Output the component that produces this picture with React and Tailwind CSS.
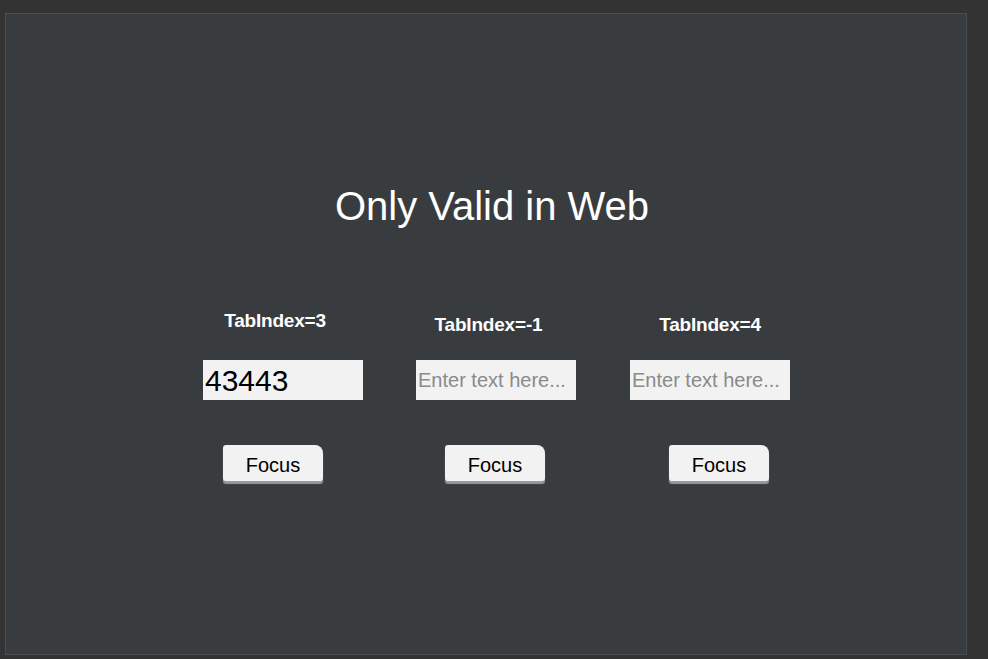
import React, { useState } from 'react'

const cols = [
  { label: 'TabIndex=3', value: '43443', labelCls: 'pr-[16px]', topCls: 'pt-0', inputCls: 'mt-[29px]', btnCls: 'ml-[20px]', gapCls: 'ml-0' },
  { label: 'TabIndex=-1', value: '', labelCls: 'pr-[15px]', topCls: 'pt-[4px]', inputCls: 'mt-[25px]', btnCls: 'ml-[29px]', gapCls: 'ml-[53px]' },
  { label: 'TabIndex=4', value: '', labelCls: 'pr-0', topCls: 'pt-[4px]', inputCls: 'mt-[25px]', btnCls: 'ml-[39px]', gapCls: 'ml-[54px]' },
]

function Column({ col }){
  const [text, setText] = useState(col.value)
  return (
    <div className={`flex flex-col w-[160px] ${col.topCls} ${col.gapCls}`}>
      <div className={`text-center text-[19px] leading-[20px] font-bold text-white tracking-[-0.2px] ${col.labelCls}`}>{col.label}</div>
      <input
        value={text}
        onChange={e => setText(e.target.value)}
        placeholder="Enter text here..."
        className={`${col.inputCls} w-[160px] h-[40px] bg-[#f2f2f2] pl-[2px] outline-none text-black placeholder:text-[#8a8a8a] ${text ? 'text-[30px]' : 'text-[20px]'}`}
      />
      <button className={`${col.btnCls} mt-[45px] w-[100px] h-[36px] pt-[3px] bg-[#f2f2f2] rounded-[3px] rounded-tr-[8px] shadow-[0_3px_1px_#9a9a9a] text-[20px] text-black`}>
        Focus
      </button>
    </div>
  )
}

export default function App(){
  return (
    <div className="w-[988px] h-[659px] bg-[#333333] pt-[13px] pl-[5px] font-['Liberation_Sans',Arial,sans-serif]">
      <div className="w-[962px] h-[642px] bg-[#393c3f] border border-[#4a4c4e] flex flex-col">
        <h1 className="mt-[169px] text-center text-[40px] leading-[46px] text-white pl-[12px]">Only Valid in Web</h1>
        <div className="mt-[82px] flex items-start pl-[197px]">
          {cols.map(c => <Column key={c.label} col={c} />)}
        </div>
      </div>
    </div>
  )
}
